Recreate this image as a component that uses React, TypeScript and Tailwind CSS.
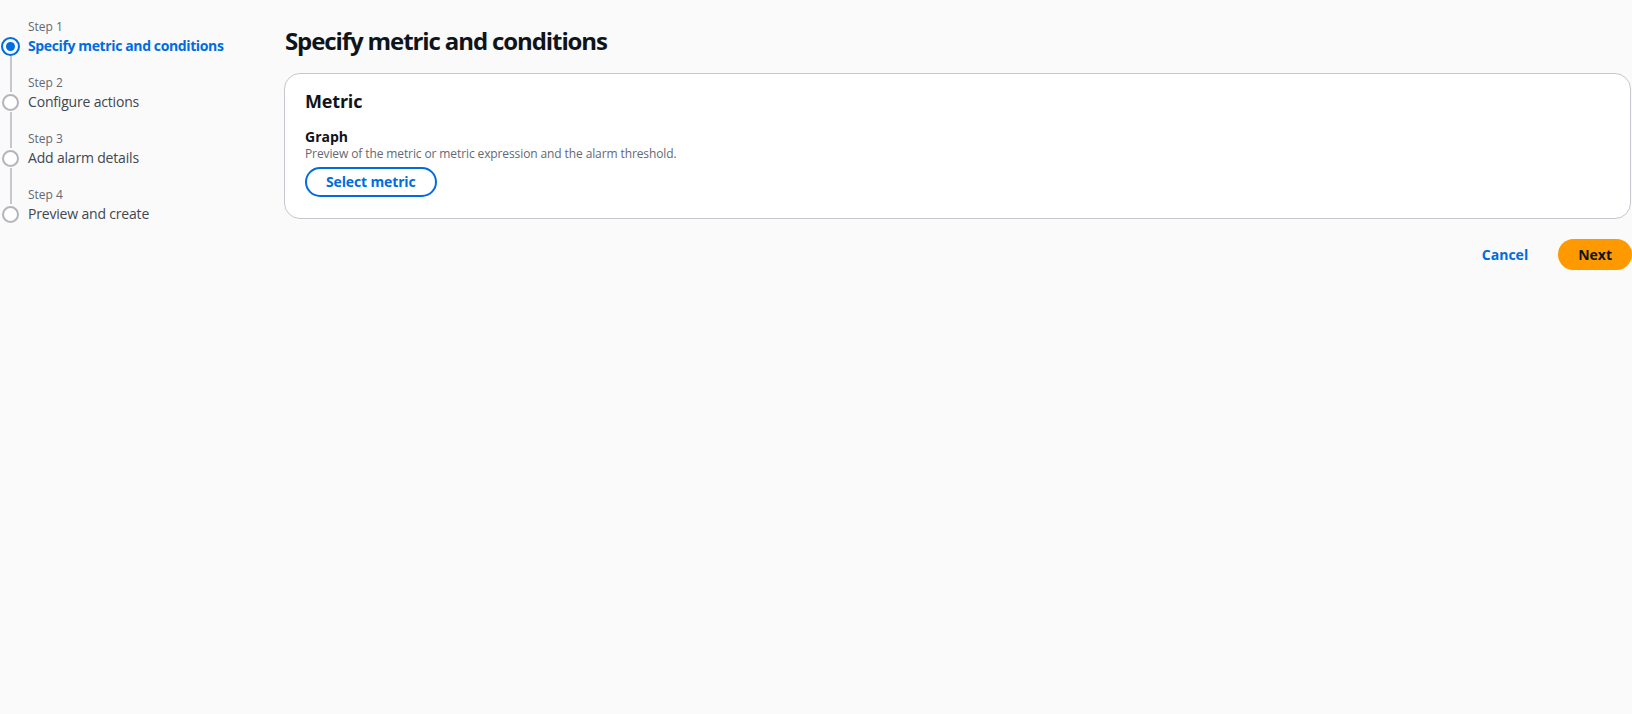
const steps = [
  { label: 'Step 1', title: 'Specify metric and conditions' },
  { label: 'Step 2', title: 'Configure actions' },
  { label: 'Step 3', title: 'Add alarm details' },
  { label: 'Step 4', title: 'Preview and create' },
];

function StepCircle({ active }: { active: boolean }) {
  if (active) {
    return (
      <div className="flex h-[19px] w-[19px] items-center justify-center rounded-full border-2 border-[#006ce0]">
        <div className="h-[9px] w-[9px] rounded-full bg-[#006ce0]" />
      </div>
    );
  }
  return <div className="h-[17px] w-[17px] rounded-full border-2 border-[#b4b4bb] bg-white" />;
}

function Wizard() {
  return (
    <nav className="w-[284px] shrink-0 pt-[18px]">
      {steps.map((s, i) => {
        const active = i === 0;
        const last = i === steps.length - 1;
        return (
          <div key={s.label} className="grid grid-cols-[20px_1fr] gap-x-2">
            <div className="flex justify-center pl-px">
              {i > 0 && <div className="w-[2px] bg-[#c6c6cd]" />}
            </div>
            <div className="pt-px pb-px text-xs leading-4 text-[#656871]">{s.label}</div>
            <div className="flex items-center justify-center">
              <StepCircle active={active} />
            </div>
            <div
              className={
                active
                  ? 'text-sm font-bold leading-5 tracking-[-0.027em] text-[#006ce0]'
                  : 'text-sm leading-5 tracking-[-0.013em] text-[#424650]'
              }
            >
              {s.title}
            </div>
            <div className="flex h-[18px] justify-center pl-px">
              {!last && <div className="w-[2px] bg-[#c6c6cd]" />}
            </div>
            <div />
          </div>
        );
      })}
    </nav>
  );
}

export default function App() {
  return (
    <div
      className="flex min-h-screen bg-[#fafafa] text-[#0f141a]"
      style={{ fontFamily: '"Open Sans", "Noto Sans", Arial, sans-serif' }}
    >
      <Wizard />
      <main className="flex-1 pr-px pt-[26px]">
        <h1 className="pl-px text-2xl font-bold leading-[30px] tracking-[-0.046em]">
          Specify metric and conditions
        </h1>
        <section className="mt-[17px] rounded-2xl border border-[#c6c6cd] bg-white px-5 pb-[21px] pt-[16px]">
          <h2 className="text-lg font-bold leading-[22px] tracking-[-0.01em]">Metric</h2>
          <div className="mt-[15px]">
            <div className="text-sm font-bold leading-[19px]">Graph</div>
            <div className="text-xs leading-4 tracking-[-0.009em] text-[#656871]">
              Preview of the metric or metric expression and the alarm threshold.
            </div>
          </div>
          <button className="mt-[5px] h-[30px] rounded-full border-2 border-[#006ce0] px-[19px] text-sm font-bold tracking-[-0.01em] text-[#006ce0]">
            Select metric
          </button>
        </section>
        <div className="mt-[20px] flex items-center justify-end gap-[10px] -mr-px">
          <button className="h-[31px] rounded-full px-5 text-sm font-bold text-[#006ce0]">
            Cancel
          </button>
          <button className="h-[31px] rounded-full bg-[#ff9900] px-5 text-sm font-bold text-[#0f141a]">
            Next
          </button>
        </div>
      </main>
    </div>
  );
}
